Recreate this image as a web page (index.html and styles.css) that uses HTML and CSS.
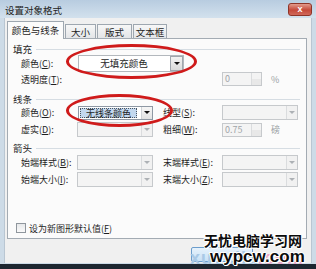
FILE: index.html
```html
<!DOCTYPE html>
<html>
<head>
    <title>设置对象格式</title>
    <link rel="stylesheet" href="styles.css">
</head>
<body>
    <div class="window">
        <div class="titlebar">
            <span class="title">设置对象格式</span>
            <span class="close">x</span>
        </div>
        <div class="client">
            <div class="tabs">
                <span class="tab active">颜色与线条</span>
                <span class="tab t-size">大小</span>
                <span class="tab t-layout">版式</span>
                <span class="tab t-text">文本框</span>
            </div>
            <div class="panel">
                <div class="group"><span>填充</span></div>
                <div class="row r-fill">
                    <label>颜色(<u>C</u>):</label>
                    <div class="combo fill-combo">
                        <span class="value">无填充颜色</span>
                        <span class="arrow boxed"></span>
                    </div>
                </div>
                <div class="row r-alpha">
                    <label>透明度(<u>T</u>):</label>
                    <div class="spin-wrap">
                        <div class="spin"><span class="num">0</span><span class="btns"></span></div>
                        <span class="unit">%</span>
                    </div>
                </div>

                <div class="group g-line"><span>线条</span></div>
                <div class="row r-line">
                    <label>颜色(<u>O</u>):</label>
                    <div class="combo line-combo">
                        <span class="value"><em>无线条颜色</em></span>
                        <span class="arrow"></span>
                    </div>
                    <span></span>
                    <label>线型(<u>S</u>):</label>
                    <div class="combo off"><span class="value"></span><span class="arrow"></span></div>
                </div>
                <div class="row r-dash">
                    <label>虚实(<u>D</u>):</label>
                    <div class="combo off"><span class="value"></span><span class="arrow"></span></div>
                    <span></span>
                    <label>粗细(<u>W</u>):</label>
                    <div class="spin-wrap">
                        <div class="spin"><span class="num">0.75</span><span class="btns"></span></div>
                        <span class="unit">磅</span>
                    </div>
                </div>

                <div class="group g-arrow"><span>箭头</span></div>
                <div class="row r-begin">
                    <label>始端样式(<u>B</u>):</label>
                    <div class="combo off"><span class="value"></span><span class="arrow"></span></div>
                    <span></span>
                    <label>末端样式(<u>E</u>):</label>
                    <div class="combo off"><span class="value"></span><span class="arrow"></span></div>
                </div>
                <div class="row r-size">
                    <label>始端大小(<u>I</u>):</label>
                    <div class="combo off"><span class="value"></span><span class="arrow"></span></div>
                    <span></span>
                    <label>末端大小(<u>Z</u>):</label>
                    <div class="combo off"><span class="value"></span><span class="arrow"></span></div>
                </div>

                <div class="check-row">
                    <span class="checkbox"></span>
                    <span>设为新图形默认值(<u>F</u>)</span>
                </div>
            </div>
            <div class="footer">
                <span class="btn"></span>
            </div>
        </div>

        <!-- hand-drawn red marks over the screenshot -->
        <div class="mark mark-fill"></div>
        <div class="mark mark-line"></div>

        <div class="watermark">
            <div class="wm-faint"><span class="b">xuexila</span><span class="p">.com</span></div>
            <div class="wm-cn">无忧电脑学习网</div>
            <div class="wm-en">wypcw.com</div>
        </div>
    </div>
</body>
</html>
```

FILE: styles.css
```css
body {
    margin: 0;
    width: 316px;
    height: 269px;
    overflow: hidden;
    background: #1d2630;
    font-family: "Noto Sans CJK SC", "Liberation Sans", sans-serif;
    font-size: 9px;
    color: #1e1e1e;
}

.window {
    position: relative;
    width: 316px;
    height: 264px;
    background: #cddbe7;
    display: flex;
    flex-direction: column;
}

.titlebar {
    height: 18px;
    display: flex;
    align-items: center;
    justify-content: space-between;
    padding: 0 5px 0 5px;
    background: linear-gradient(#b8cce0, #d3e1ed);
    box-sizing: border-box;
}

.title {
    font-size: 9.5px;
    color: #222;
    padding-top: 1px;
}

.close {
    width: 22px;
    height: 11px;
    margin-right: -1px;
    border: 1px solid #8e3428;
    border-radius: 3px;
    background: linear-gradient(#e29a8c, #c5493a 55%, #d0685a);
    color: #fff;
    font-family: "Liberation Sans", sans-serif;
    font-weight: bold;
    font-size: 9px;
    line-height: 10px;
    text-align: center;
}

.client {
    flex: 1;
    margin: 0 4px 1px 4px;
    background: #f0f0f0;
    border-left: 1px solid #b9c6d2;
    border-right: 1px solid #b9c6d2;
    display: flex;
    flex-direction: column;
}

.tabs {
    display: flex;
    align-items: flex-end;
    gap: 1px;
    height: 17px;
    margin: 3px 0 0 2px;
}

.tab {
    height: 14px;
    line-height: 14px;
    box-sizing: border-box;
    border: 1px solid #9ea7b0;
    border-bottom: none;
    background: linear-gradient(#f7f7f7, #e3e5e8);
    text-align: center;
    font-size: 9.5px;
}

.tab.active {
    width: 57px;
    height: 18px;
    line-height: 16px;
    margin-bottom: -1px;
    background: #fbfbfb;
    position: relative;
    z-index: 1;
}

.t-size { width: 31px; }
.t-layout { width: 35px; }
.t-text { width: 34px; }

.panel {
    margin-left: 2px;
    width: 300px;
    height: 201px;
    box-sizing: border-box;
    border: 1px solid #a3abb3;
    background: #fbfbfb;
    padding-top: 4px;
}

.group {
    height: 12px;
    display: flex;
    align-items: center;
    padding: 0 6px 0 5px;
    font-size: 9.5px;
}

.group::after {
    content: "";
    flex: 1;
    height: 1px;
    margin-left: 4px;
    background: #d6dde3;
}

.g-line { margin-top: 7px; }
.g-arrow { margin-top: 5px; }

.row {
    display: grid;
    grid-template-columns: 56px 76px 10px 59px 76px;
    align-items: center;
    padding-left: 13px;
    height: 15px;
}

.row label {
    white-space: nowrap;
}

.r-fill { height: 17px; }
.r-alpha { height: 14px; }
.r-line { height: 15px; }
.r-dash { margin-top: 2px; }
.r-begin { margin-top: 1px; }
.r-size { margin-top: 2px; }

.r-alpha .spin-wrap {
    grid-column: 5;
}

.combo {
    height: 15px;
    box-sizing: border-box;
    display: flex;
    border: 1px solid #a7adb4;
    background: #fff;
}

.combo .value {
    flex: 1;
    text-align: center;
    line-height: 13px;
}

.combo .arrow {
    width: 10px;
    display: flex;
    align-items: center;
    justify-content: center;
    border-left: 1px solid #cfd3d7;
    background: linear-gradient(#f6f6f6, #e2e2e2);
}

.combo .arrow::after {
    content: "";
    border-left: 3px solid transparent;
    border-right: 3px solid transparent;
    border-top: 3px solid #111;
}

.fill-combo {
    grid-column: 2 / span 4;
    width: 106px;
    height: 17px;
    margin-left: 1px;
    border-color: #b3b8bd;
    gap: 1px;
}

.fill-combo .value {
    line-height: 15px;
    font-size: 9.5px;
}

.combo .arrow.boxed {
    width: 11px;
    border: 1px solid #a0a6ad;
    background: linear-gradient(#f3f3f3, #dadada);
}

.line-combo {
    margin-left: 1px;
    width: 75px;
    height: 14px;
    border-color: #8e98a4;
}

.line-combo .value {
    padding: 1px;
    display: flex;
}

.line-combo em {
    flex: 1;
    font-style: normal;
    line-height: 10px;
    background: #c3d8ef;
    border: 1px dotted #4a5560;
    margin-right: 3px;
}

.combo.off {
    background: #f4f4f4;
    border-color: #c6c9cc;
}

.combo.off .arrow {
    background: #f1f1f1;
    border-left-color: #dadcde;
}

.combo.off .arrow::after {
    border-top-color: #adb1b5;
}

.spin-wrap {
    display: flex;
    align-items: center;
}

.spin {
    display: flex;
    width: 40px;
    height: 14px;
    box-sizing: border-box;
    border: 1px solid #c6c9cc;
    background: #f4f4f4;
}

.spin .num {
    flex: 1;
    color: #a0a4a8;
    padding-left: 2px;
    line-height: 12px;
}

.spin .btns {
    width: 9px;
    border-left: 1px solid #dadcde;
    background: linear-gradient(#f3f3f3 50%, #e8e8e8 50%);
}

.unit {
    margin-left: 9px;
    color: #9a9ea2;
}

.check-row {
    margin-top: 34px;
    height: 14px;
    display: flex;
    align-items: center;
    gap: 3px;
    padding-left: 8px;
}

.checkbox {
    width: 8px;
    height: 8px;
    border: 1px solid #8f969d;
    background: linear-gradient(#e6e8ea, #fafafa);
}

.footer {
    flex: 1;
    display: flex;
    justify-content: flex-end;
    align-items: flex-end;
    padding: 0 58px 1px 0;
}

.btn {
    width: 60px;
    height: 13px;
    border: 1px solid #6c9dcc;
    border-radius: 2px;
    background: linear-gradient(#e6f2fc, #c9e1f6);
}

.mark {
    position: absolute;
    border: 3px solid #cf1b1b;
    border-radius: 50%;
    box-sizing: border-box;
}

.mark-fill {
    left: 66px;
    top: 44px;
    width: 131px;
    height: 35px;
}

.mark-line {
    left: 66px;
    top: 94px;
    width: 107px;
    height: 33px;
}

.watermark {
    position: absolute;
    left: 204px;
    top: 232px;
    width: 104px;
    font-weight: bold;
    color: #0b0b0b;
}

.wm-faint {
    position: absolute;
    left: -14px;
    top: 16px;
    font-family: "Liberation Sans", sans-serif;
    font-size: 18px;
    letter-spacing: 1px;
}

.wm-faint .b { color: #a9c9e6; }
.wm-faint .p { color: #e9a7c7; }

.wm-cn {
    position: relative;
    font-size: 14px;
    line-height: 17px;
    letter-spacing: 0;
    text-shadow: 1px 0 #fff, -1px 0 #fff, 0 1px #fff, 0 -1px #fff, 1px 1px #fff, -1px -1px #fff;
}

.wm-en {
    position: relative;
    font-family: "Liberation Sans", sans-serif;
    font-size: 17px;
    line-height: 16px;
    padding-left: 6px;
    text-shadow: 1px 0 #fff, -1px 0 #fff, 0 1px #fff, 0 -1px #fff, 1px 1px #fff, -1px -1px #fff;
}
```
